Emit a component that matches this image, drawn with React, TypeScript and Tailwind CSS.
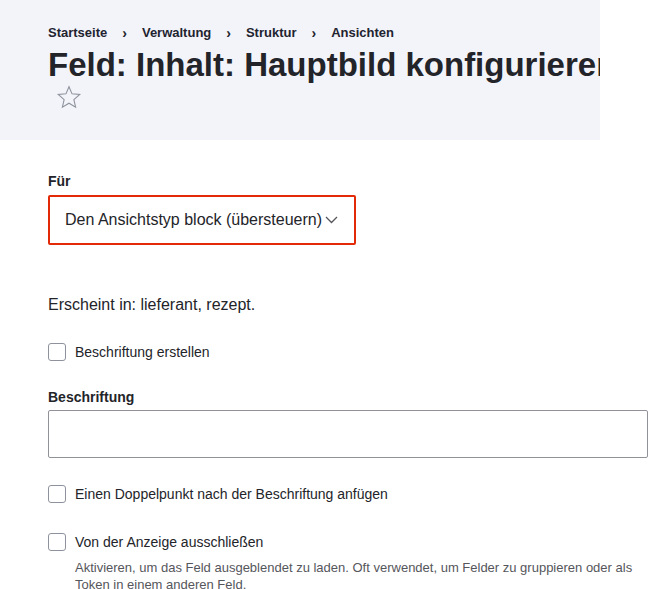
import React from 'react';

const crumbs = ['Startseite', 'Verwaltung', 'Struktur', 'Ansichten'];

function Checkbox({ label }: { label: string }) {
  return (
    <label className="flex items-center gap-[9px] text-[14px] leading-[18px] text-[#232429]">
      <span className="block h-[18px] w-[18px] rounded-[3px] border border-[#8e929c] bg-white" />
      {label}
    </label>
  );
}

export default function App() {
  return (
    <div className="min-h-[589px] w-[648px] bg-white font-['Liberation_Sans',Arial,sans-serif] text-[#232429]">
      {/* Page header */}
      <div className="h-[140px] w-[600px] overflow-hidden bg-[#f3f4f9] pl-[48px] pt-[25px]">
        <nav className="flex items-center text-[13px] font-bold leading-[16px] text-[#222330]">
          {crumbs.map((c, i) => (
            <span key={c} className="flex items-center">
              {i > 0 && <span className="mx-[15px] text-[14px]">›</span>}
              {c}
            </span>
          ))}
        </nav>
        <h1 className="mt-[6px] whitespace-nowrap text-[33px] font-bold leading-[36px] text-[#232429]">
          Feld: Inhalt: Hauptbild konfigurieren
        </h1>
        <svg className="ml-[8px] mt-[1px]" width="26" height="26" viewBox="0 0 24 24" fill="none" stroke="#8e929c" strokeWidth="1" strokeLinejoin="miter">
          <path d="M12 2.5l2.8 6.6 7.1.6-5.4 4.7 1.6 7-6.1-3.7-6.1 3.7 1.6-7-5.4-4.7 7.1-.6z" />
        </svg>
      </div>

      {/* Form */}
      <div className="px-[48px] pt-[33px]">
        <div className="text-[14px] font-bold leading-[16px]">Für</div>
        <div className="mt-[6px] flex h-[50px] w-[308px] items-center justify-between rounded-[2px] border-2 border-[#e32a08] pl-[15px] pr-[16px] text-[16px]">
          <span>Den Ansichtstyp block (übersteuern)</span>
          <svg width="13" height="8" viewBox="0 0 13 8" fill="none" stroke="#55565b" strokeWidth="1.3">
            <path d="M1 1l5.5 5.5 5.5-5.5" />
          </svg>
        </div>

        <p className="mt-[50px] text-[16px] leading-[20px]">Erscheint in: lieferant, rezept.</p>

        <div className="mt-[28px]">
          <Checkbox label="Beschriftung erstellen" />
        </div>

        <div className="mt-[28px] text-[14px] font-bold leading-[16px]">Beschriftung</div>
        <div className="mt-[5px] h-[48px] w-[600px] rounded-[2px] border border-[#919297] bg-white" />

        <div className="mt-[27px]">
          <Checkbox label="Einen Doppelpunkt nach der Beschriftung anfügen" />
        </div>

        <div className="mt-[30px]">
          <Checkbox label="Von der Anzeige ausschließen" />
          <p className="ml-[27px] mt-[8px] w-[560px] text-[13px] leading-[17px] text-[#55565b]">
            Aktivieren, um das Feld ausgeblendet zu laden. Oft verwendet, um Felder zu gruppieren oder als Token in einem anderen Feld.
          </p>
        </div>
      </div>
    </div>
  );
}
